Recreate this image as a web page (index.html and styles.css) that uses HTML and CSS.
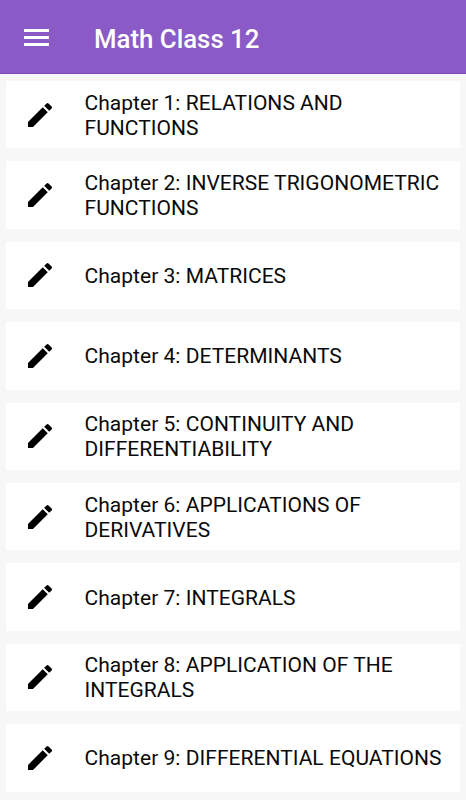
FILE: index.html
```html
<!doctype html>
<html lang="en">
<head>
	<meta charset="UTF-8">
	<title>Math Class 12</title>
	<link rel="stylesheet" href="styles.css">
</head>
<body>
	<header class="app-bar">
		<svg class="menu-icon" viewBox="0 0 25 17" width="25" height="17">
			<path d="M0 0h25v3H0zM0 7h25v3H0zM0 14h25v3H0z" fill="#fff"/>
		</svg>
		<h1 class="app-title">Math Class 12</h1>
	</header>
	<div class="chapters">
		<div class="chapter">
			<svg class="pencil" viewBox="0 0 24 24"><path d="M3 17.25V21h3.75L17.81 9.94l-3.75-3.75L3 17.25zM20.71 7.04a1 1 0 0 0 0-1.41l-2.34-2.34a1 1 0 0 0-1.41 0l-1.83 1.83 3.75 3.75 1.83-1.83z"/></svg>
			<div class="chapter-name">Chapter 1: RELATIONS AND FUNCTIONS</div>
		</div>
		<div class="chapter">
			<svg class="pencil" viewBox="0 0 24 24"><path d="M3 17.25V21h3.75L17.81 9.94l-3.75-3.75L3 17.25zM20.71 7.04a1 1 0 0 0 0-1.41l-2.34-2.34a1 1 0 0 0-1.41 0l-1.83 1.83 3.75 3.75 1.83-1.83z"/></svg>
			<div class="chapter-name">Chapter 2: INVERSE TRIGONOMETRIC FUNCTIONS</div>
		</div>
		<div class="chapter">
			<svg class="pencil" viewBox="0 0 24 24"><path d="M3 17.25V21h3.75L17.81 9.94l-3.75-3.75L3 17.25zM20.71 7.04a1 1 0 0 0 0-1.41l-2.34-2.34a1 1 0 0 0-1.41 0l-1.83 1.83 3.75 3.75 1.83-1.83z"/></svg>
			<div class="chapter-name">Chapter 3: MATRICES</div>
		</div>
		<div class="chapter">
			<svg class="pencil" viewBox="0 0 24 24"><path d="M3 17.25V21h3.75L17.81 9.94l-3.75-3.75L3 17.25zM20.71 7.04a1 1 0 0 0 0-1.41l-2.34-2.34a1 1 0 0 0-1.41 0l-1.83 1.83 3.75 3.75 1.83-1.83z"/></svg>
			<div class="chapter-name">Chapter 4: DETERMINANTS</div>
		</div>
		<div class="chapter">
			<svg class="pencil" viewBox="0 0 24 24"><path d="M3 17.25V21h3.75L17.81 9.94l-3.75-3.75L3 17.25zM20.71 7.04a1 1 0 0 0 0-1.41l-2.34-2.34a1 1 0 0 0-1.41 0l-1.83 1.83 3.75 3.75 1.83-1.83z"/></svg>
			<div class="chapter-name">Chapter 5: CONTINUITY AND DIFFERENTIABILITY</div>
		</div>
		<div class="chapter">
			<svg class="pencil" viewBox="0 0 24 24"><path d="M3 17.25V21h3.75L17.81 9.94l-3.75-3.75L3 17.25zM20.71 7.04a1 1 0 0 0 0-1.41l-2.34-2.34a1 1 0 0 0-1.41 0l-1.83 1.83 3.75 3.75 1.83-1.83z"/></svg>
			<div class="chapter-name">Chapter 6: APPLICATIONS OF DERIVATIVES</div>
		</div>
		<div class="chapter">
			<svg class="pencil" viewBox="0 0 24 24"><path d="M3 17.25V21h3.75L17.81 9.94l-3.75-3.75L3 17.25zM20.71 7.04a1 1 0 0 0 0-1.41l-2.34-2.34a1 1 0 0 0-1.41 0l-1.83 1.83 3.75 3.75 1.83-1.83z"/></svg>
			<div class="chapter-name">Chapter 7: INTEGRALS</div>
		</div>
		<div class="chapter">
			<svg class="pencil" viewBox="0 0 24 24"><path d="M3 17.25V21h3.75L17.81 9.94l-3.75-3.75L3 17.25zM20.71 7.04a1 1 0 0 0 0-1.41l-2.34-2.34a1 1 0 0 0-1.41 0l-1.83 1.83 3.75 3.75 1.83-1.83z"/></svg>
			<div class="chapter-name">Chapter 8: APPLICATION OF THE INTEGRALS</div>
		</div>
		<div class="chapter">
			<svg class="pencil" viewBox="0 0 24 24"><path d="M3 17.25V21h3.75L17.81 9.94l-3.75-3.75L3 17.25zM20.71 7.04a1 1 0 0 0 0-1.41l-2.34-2.34a1 1 0 0 0-1.41 0l-1.83 1.83 3.75 3.75 1.83-1.83z"/></svg>
			<div class="chapter-name">Chapter 9: DIFFERENTIAL EQUATIONS</div>
		</div>
	</div>
</body>
</html>
```

FILE: styles.css
```css
html, body {
	margin: 0;
	padding: 0;
	height: 800px;
	overflow: hidden;
	background: #f7f7f7;
	font-family: Roboto, "Liberation Sans", sans-serif;
}

.app-bar {
	display: flex;
	align-items: center;
	height: 74px;
	padding-left: 24px;
	background: #8a5ac6;
	border-bottom: 1px solid #7a48bd;
	box-sizing: border-box;
}
.menu-icon {
	flex: none;
	margin-top: 2px;
}
.app-title {
	margin: 5px 0 0 45px;
	font-size: 25.8px;
	font-weight: 500;
	color: #fff;
}

.chapters {
	display: flex;
	flex-direction: column;
	gap: 13px;
	padding: 7px 6px 0;
}
.chapter {
	display: flex;
	align-items: center;
	height: 67.4px;
	background: #fff;
}
.pencil {
	flex: none;
	width: 32px;
	height: 32px;
	margin-left: 18px;
}
.chapter-name {
	margin: 2px 14px 0 28.5px;
	font-size: 21px;
	line-height: 25px;
	letter-spacing: 0.03px;
	color: #0a0a0a;
}
```
